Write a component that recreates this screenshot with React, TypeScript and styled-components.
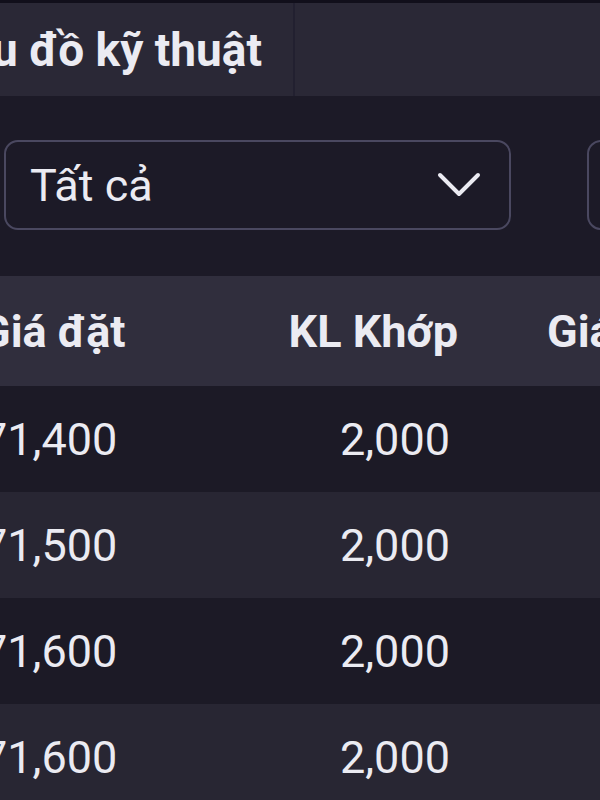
import React from "react";
import styled, { createGlobalStyle } from "styled-components";

const Global = createGlobalStyle`
  html, body { margin: 0; padding: 0; background: #1c1a27; }
  body { font-family: Roboto, "Noto Sans", "Liberation Sans", sans-serif; color: #e6e6ee; }
  #root { width: 600px; height: 800px; overflow: hidden; }
`;

const Page = styled.div`
  width: 600px;
  height: 800px;
  overflow: hidden;
  display: flex;
  flex-direction: column;
  background: #1c1a27;
  border-top: 3px solid #110f1b;
`;

const TabBar = styled.div`
  height: 93px;
  flex: none;
  display: flex;
  background: #2a2836;
`;

const Tab = styled.div<{ $width: number }>`
  width: ${(p) => p.$width}px;
  flex: none;
  display: flex;
  align-items: center;
  justify-content: flex-end;
  padding-right: 31px;
  box-sizing: border-box;
  overflow: hidden;
  white-space: nowrap;
  border-right: 2px solid #222030;
  font-size: 46px;
  font-weight: 700;
  color: #ebebf2;
`;

const FilterRow = styled.div`
  flex: none;
  height: 180px;
  display: flex;
  align-items: center;
  gap: 76px;
  padding-left: 4px;
  padding-bottom: 2px;
  box-sizing: border-box;
`;

const Select = styled.div<{ $width: number }>`
  width: ${(p) => p.$width}px;
  flex: none;
  height: 90px;
  box-sizing: border-box;
  border: 2px solid #4a4860;
  border-radius: 14px;
  display: flex;
  align-items: center;
  justify-content: space-between;
  padding: 0 28px 0 24px;
  font-size: 45px;
  color: #ebebf2;
`;

const Table = styled.div`
  margin-left: -30px;
  display: flex;
  flex-direction: column;
`;

const Row = styled.div<{ $kind: "head" | "dark" | "light" }>`
  display: grid;
  grid-template-columns: 290px 198px 320px;
  height: ${(p) => (p.$kind === "head" ? 110 : 106)}px;
  align-items: center;
  background: ${(p) =>
    p.$kind === "head" ? "#302e3d" : p.$kind === "dark" ? "#1c1a26" : "#282633"};
  font-size: 45px;
  font-weight: ${(p) => (p.$kind === "head" ? 700 : 400)};
  color: #ebebf2;
  white-space: nowrap;
`;

const Cell = styled.div<{ $align?: "left" | "right"; $pl?: number; $pr?: number }>`
  text-align: ${(p) => p.$align || "left"};
  padding-left: ${(p) => p.$pl || 0}px;
  padding-right: ${(p) => p.$pr || 0}px;
  overflow: hidden;
`;

const Chevron = () => (
  <svg width="44" height="26" viewBox="0 0 44 26" fill="none">
    <polyline
      points="3,3 22,22 41,3"
      stroke="#ebebf2"
      strokeWidth="4"
      strokeLinecap="round"
      strokeLinejoin="round"
    />
  </svg>
);

const rows = [
  { price: "71,400", qty: "2,000" },
  { price: "71,500", qty: "2,000" },
  { price: "71,600", qty: "2,000" },
  { price: "71,600", qty: "2,000" },
];

export default function App() {
  return (
    <>
      <Global />
      <Page>
        <TabBar>
          <Tab $width={295}>Biểu đồ kỹ thuật</Tab>
        </TabBar>
        <FilterRow>
          <Select $width={507}>
            <span>Tất cả</span>
            <Chevron />
          </Select>
          <Select $width={300}>
            <span>Tất cả</span>
            <Chevron />
          </Select>
        </FilterRow>
        <Table>
          <Row $kind="head">
            <Cell $pl={10}>Giá đặt</Cell>
            <Cell $align="right">KL Khớp</Cell>
            <Cell $pl={89}>Giá khớp</Cell>
          </Row>
          {rows.map((r, i) => (
            <Row key={i} $kind={i % 2 === 0 ? "dark" : "light"}>
              <Cell $pl={12}>{r.price}</Cell>
              <Cell $align="right" $pr={8}>
                {r.qty}
              </Cell>
              <Cell $align="right" $pr={16}>
                {r.price}
              </Cell>
            </Row>
          ))}
        </Table>
      </Page>
    </>
  );
}
